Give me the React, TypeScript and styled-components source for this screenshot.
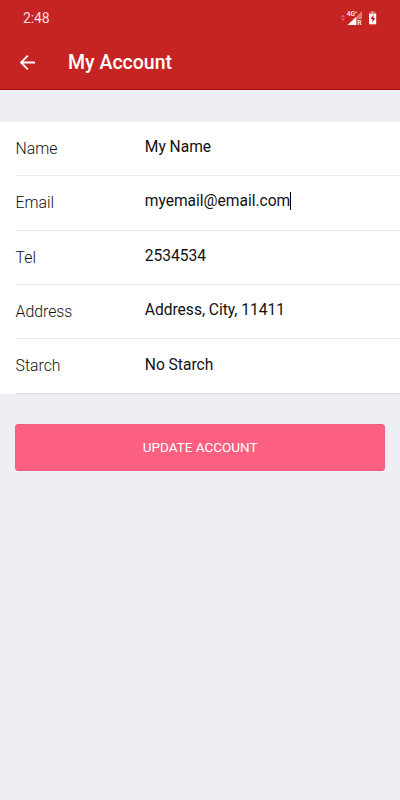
import React from "react";
import styled, { createGlobalStyle } from "styled-components";

const GlobalStyle = createGlobalStyle`
  *, *::before, *::after { box-sizing: border-box; }
  body { margin: 0; background: #efeef4; font-family: Roboto, sans-serif; }
`;

const Screen = styled.main`
  display: flex;
  flex-direction: column;
  width: 400px;
  min-height: 800px;
  background: #efeef4;
`;

const Header = styled.header`
  height: 90px;
  background: #c62323;
  border-bottom: 1px solid #a90b14;
  color: #fff;
`;

const StatusBar = styled.div`
  display: flex;
  align-items: center;
  justify-content: space-between;
  height: 36px;
  padding: 0 22px 0 23px;
`;

const Clock = styled.span`
  font-size: 14px;
  line-height: 16px;
  letter-spacing: -0.1px;
  color: #fbdede;
`;

const StatusIcons = styled.svg`
  display: block;
  width: 38px;
  height: 18px;
`;

const TitleBar = styled.div`
  display: flex;
  align-items: center;
  height: 53px;
  padding-left: 19px;
`;

const BackButton = styled.button`
  display: flex;
  width: 17px;
  height: 17px;
  margin-right: 32px;
  padding: 0;
  border: 0;
  background: none;
  color: #fff;
`;

const Title = styled.h1`
  margin: 0;
  font-size: 19.5px;
  line-height: 24px;
  font-weight: 500;
`;

const FieldList = styled.section`
  margin-top: 32px;
  padding-left: 15.6px;
  background: #fff;
`;

const Field = styled.label`
  display: grid;
  grid-template-columns: 129.2px 1fr;
  height: 54.35px;
  border-bottom: 1px solid #ececee;

  &:last-child {
    border-bottom-color: #d9d9dd;
  }
`;

const FieldName = styled.span`
  padding-top: 17.1px;
  font-size: 15.8px;
  line-height: 20px;
  font-weight: 300;
  color: #111;
`;

const FieldValue = styled.span`
  display: flex;
  align-items: flex-start;
  padding-top: 15.15px;
  font-size: 15.6px;
  letter-spacing: -0.02px;
  line-height: 20px;
  color: #111;
`;

const Caret = styled.i`
  width: 1px;
  height: 18px;
  margin-top: 0.5px;
  background: #000;
`;

const UpdateButton = styled.button`
  height: 46.6px;
  margin: 30.6px 15px 0 15.4px;
  padding: 0 0 2px;
  border: 1px solid #f05f80;
  border-radius: 3px;
  background: #fb6080;
  color: #fff;
  font: 400 13.5px/16px Roboto, sans-serif;
`;

const fields = [
  { name: "Name", value: "My Name" },
  { name: "Email", value: "myemail@email.com", focused: true },
  { name: "Tel", value: "2534534" },
  { name: "Address", value: "Address, City, 11411" },
  { name: "Starch", value: "No Starch" },
];

export default function App() {
  return (
    <Screen>
      <GlobalStyle />
      <Header>
        <StatusBar>
          <Clock>2:48</Clock>
          <StatusIcons viewBox="340 9 38 18">
            <path d="M341 17l2-2.200 2 2.200zM341 18.500l2 2.200 2-2.200z" fill="#e06a6a" />
            <path d="M347.500 25L356 17v8z" fill="#fff" />
            <path d="M356 17l6-6V19h-4.500v6H356z" fill="#e07a7a" />
            <text x="346.800" y="16" fontSize="6.500" fontWeight="500" fill="#fff">4G</text>
            <path d="M355.200 11.500l1.500 1.800M356.700 11.500l-1.500 1.800" stroke="#fff" strokeWidth="0.700" />
            <text x="357.500" y="25" fontSize="6.500" fontWeight="500" fill="#fff">R</text>
            <path d="M369 14.500v-2h2V11.300h3.200v1.200h2v2z" fill="#e58a8a" />
            <path d="M369 14h7.200v10.300H369z" fill="#fff" />
            <path d="M373.500 14.500l-2.800 4.500h1.700v3.500l2.800-4.600h-1.700z" fill="#b51c20" />
          </StatusIcons>
        </StatusBar>
        <TitleBar>
          <BackButton aria-label="Back">
            <svg width="17" height="17" viewBox="0 0 17 17" fill="none" stroke="currentColor" strokeWidth="1.800">
              <path d="M16 8.500H2M8.800 1.700L2 8.500l6.800 6.800" />
            </svg>
          </BackButton>
          <Title>My Account</Title>
        </TitleBar>
      </Header>
      <FieldList>
        {fields.map(({ name, value, focused }) => (
          <Field key={name}>
            <FieldName>{name}</FieldName>
            <FieldValue>
              {value}
              {focused && <Caret />}
            </FieldValue>
          </Field>
        ))}
      </FieldList>
      <UpdateButton>UPDATE ACCOUNT</UpdateButton>
    </Screen>
  );
}
